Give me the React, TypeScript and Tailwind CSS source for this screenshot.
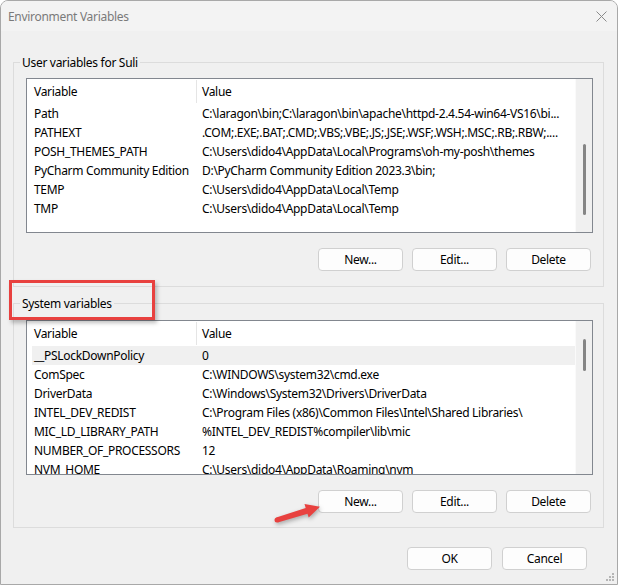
import React from 'react';

const userVars: [string, string][] = [
  ['Path', 'C:\\laragon\\bin;C:\\laragon\\bin\\apache\\httpd-2.4.54-win64-VS16\\bi...'],
  ['PATHEXT', '.COM;.EXE;.BAT;.CMD;.VBS;.VBE;.JS;.JSE;.WSF;.WSH;.MSC;.RB;.RBW;....'],
  ['POSH_THEMES_PATH', 'C:\\Users\\dido4\\AppData\\Local\\Programs\\oh-my-posh\\themes'],
  ['PyCharm Community Edition', 'D:\\PyCharm Community Edition 2023.3\\bin;'],
  ['TEMP', 'C:\\Users\\dido4\\AppData\\Local\\Temp'],
  ['TMP', 'C:\\Users\\dido4\\AppData\\Local\\Temp'],
];

const systemVars: [string, string][] = [
  ['__PSLockDownPolicy', '0'],
  ['ComSpec', 'C:\\WINDOWS\\system32\\cmd.exe'],
  ['DriverData', 'C:\\Windows\\System32\\Drivers\\DriverData'],
  ['INTEL_DEV_REDIST', 'C:\\Program Files (x86)\\Common Files\\Intel\\Shared Libraries\\'],
  ['MIC_LD_LIBRARY_PATH', '%INTEL_DEV_REDIST%compiler\\lib\\mic'],
  ['NUMBER_OF_PROCESSORS', '12'],
  ['NVM_HOME', 'C:\\Users\\dido4\\AppData\\Roaming\\nvm'],
];

function Button({ label }: { label: string }) {
  return (
    <button className="w-[85px] h-[23px] pt-[1px] rounded-[4px] border border-[#d0d0d0] bg-[#fdfdfd] text-[12px] text-black leading-none flex items-center justify-center">
      {label}
    </button>
  );
}

function ListView({
  rows,
  selected,
  thumbTop,
  thumbHeight,
}: {
  rows: [string, string][];
  selected?: number;
  thumbTop: string;
  thumbHeight: string;
}) {
  return (
    <div className="w-[567px] h-[155px] border border-[#82878f] bg-white flex overflow-hidden">
      <div className="flex-1 min-w-0 flex flex-col">
        <div className="h-[25px] shrink-0 flex items-center">
          <div className="w-[169px] pl-[7px] pt-[1px]">Variable</div>
          <div className="w-px h-[23px] bg-[#e5e5e5]" />
          <div className="pl-[5px] pt-[1px]">Value</div>
        </div>
        {rows.map(([name, value], i) => (
          <div
            key={name}
            className={
              'h-[19px] shrink-0 ml-[5px] pt-[1px] flex items-center whitespace-nowrap ' +
              (i === selected ? 'bg-[#f0f0f0]' : '')
            }
          >
            <div className="w-[170px] pl-[2px] overflow-hidden">{name}</div>
            <div className="flex-1 min-w-0 overflow-hidden">{value}</div>
          </div>
        ))}
      </div>
      <div className="w-[17px] shrink-0 bg-[#f0f0f0] border-l border-[#fafafa] flex justify-center">
        <div className={'w-[3px] rounded-full bg-[#858585] ' + thumbTop + ' ' + thumbHeight} />
      </div>
    </div>
  );
}

function GroupBox({
  title,
  children,
  className,
}: {
  title: string;
  children: React.ReactNode;
  className?: string;
}) {
  return (
    <div
      className={
        'relative w-[591px] h-[225px] border border-[#dcdcdc] px-[12px] pt-[15px] ' + (className ?? '')
      }
    >
      <span className="absolute left-[6px] -top-[8px] px-[2px] bg-[#f0f0f0] leading-[16px]">{title}</span>
      {children}
      <div className="mt-[15px] flex justify-end gap-[9px]">
        <Button label="New..." />
        <Button label="Edit..." />
        <Button label="Delete" />
      </div>
    </div>
  );
}

export default function App() {
  return (
    <div
      className="relative w-[618px] h-[585px] bg-[#f0f0f0] border border-[#a8a8a8] rounded-t-[8px] overflow-hidden text-[12px] tracking-[-0.3px] text-black"
      style={{ fontFamily: '"Segoe UI", "Noto Sans", "Open Sans", sans-serif' }}
    >
      <div className="h-[30px] bg-[#f3f3f3] flex items-center justify-between pl-[7px] pr-[10px]">
        <span className="text-[#7a7a7a] text-[12px] pt-[2px]">Environment Variables</span>
        <svg width="11" height="11" viewBox="0 0 11 11" className="mt-[1px]">
          <path d="M0.5 0.5 L10.5 10.5 M10.5 0.5 L0.5 10.5" stroke="#8a8a8a" strokeWidth="1" />
        </svg>
      </div>

      <div className="pl-[12px] pt-[31px]">
        <GroupBox title="User variables for Suli">
          <ListView rows={userVars} thumbTop="mt-[65px]" thumbHeight="h-[71px]" />
        </GroupBox>
        <GroupBox title="System variables" className="mt-[16px] pt-[16px]">
          <ListView rows={systemVars} selected={0} thumbTop="mt-[18px]" thumbHeight="h-[32px]" />
        </GroupBox>
        <div className="mt-[19px] flex justify-end gap-[10px] pr-[30px]">
          <Button label="OK" />
          <Button label="Cancel" />
        </div>
      </div>

      {/* annotation box */}
      <div className="absolute left-[8px] top-[279px] w-[146px] h-[40px] border-[3px] border-[#e8413f] shadow-[2px_3px_4px_rgba(0,0,0,0.25)]" />

      {/* annotation arrow */}
      <svg
        className="absolute left-[269px] top-[497px]"
        width="56"
        height="32"
        viewBox="0 0 56 32"
        style={{ filter: 'drop-shadow(1px 2px 2px rgba(0,0,0,0.3))' }}
      >
        <polygon
          points="7.7,24.4 37.5,15.7 38.7,19.5 50,8.7 34.5,6.1 35.7,9.9 6.3,19.6"
          fill="#e8413f"
        />
        <circle cx="7" cy="22" r="2.5" fill="#e8413f" />
      </svg>

      {/* resize grip */}
      <svg className="absolute right-[2px] bottom-[2px]" width="10" height="10" viewBox="0 0 10 10">
        <rect x="7" y="1" width="2" height="2" fill="#b5b5b5" />
        <rect x="4" y="4" width="2" height="2" fill="#b5b5b5" />
        <rect x="7" y="4" width="2" height="2" fill="#b5b5b5" />
        <rect x="1" y="7" width="2" height="2" fill="#b5b5b5" />
        <rect x="4" y="7" width="2" height="2" fill="#b5b5b5" />
        <rect x="7" y="7" width="2" height="2" fill="#b5b5b5" />
      </svg>
    </div>
  );
}
